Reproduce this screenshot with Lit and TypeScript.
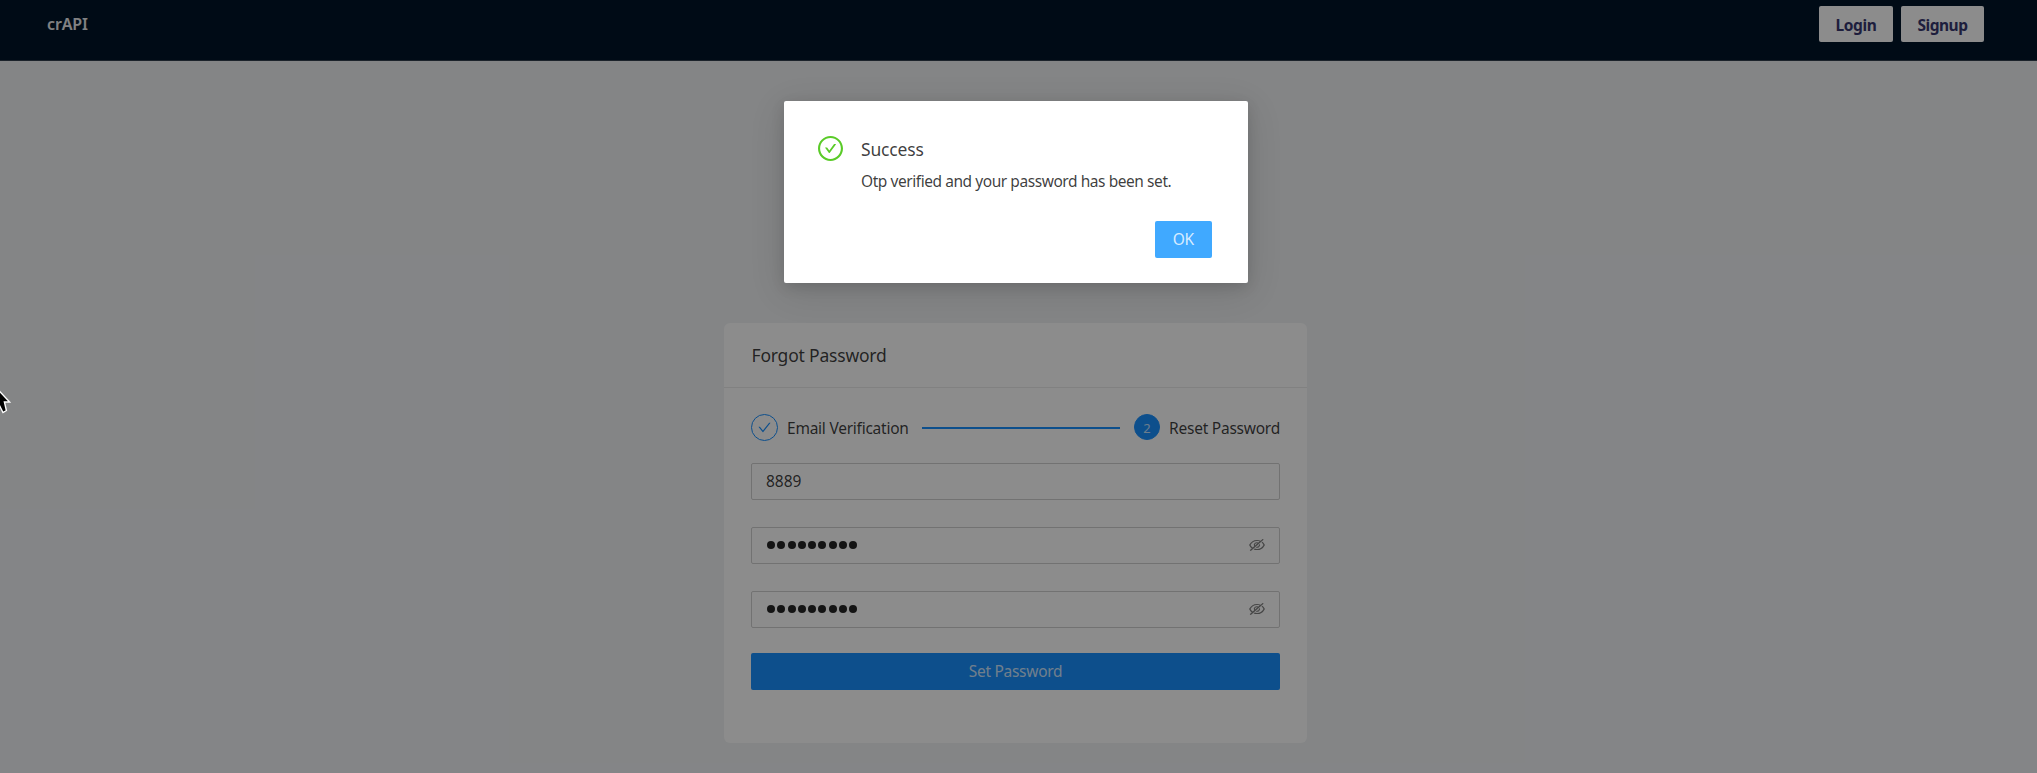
import { LitElement, html, css, svg } from "lit";
import { customElement, property } from "lit/decorators.js";

const ICONS: Record<string, string[]> = {
  check: [
    "M912 190h-69.9c-9.8 0-19.1 4.5-25.1 12.2L404.7 724.5 207 474a32 32 0 00-25.1-12.2H112c-6.7 0-10.4 7.7-6.3 12.9l273.9 347c12.8 16.2 37.4 16.2 50.3 0l488.4-618.9c4.1-5.1.4-12.8-6.3-12.8z",
  ],
  success: [
    "M699 353h-46.9c-10.2 0-19.9 4.9-25.9 13.3L469 584.3l-71.2-98.8c-6-8.3-15.6-13.3-25.9-13.3H325c-6.5 0-10.3 7.4-6.5 12.7l124.6 172.8a31.8 31.8 0 0051.7 0l210.6-292c3.9-5.3.1-12.7-6.4-12.7z",
    "M512 64C264.6 64 64 264.6 64 512s200.6 448 448 448 448-200.6 448-448S759.4 64 512 64zm0 820c-205.4 0-372-166.6-372-372s166.6-372 372-372 372 166.6 372 372-166.6 372-372 372z",
  ],
  hidden: [
    "M942.2 486.2Q889.47 375.11 816.7 305l-50.88 50.88C807.31 395.53 843.45 447.4 874.7 512 791.5 684.2 673.4 766 512 766q-72.67 0-133.87-22.38L323 798.75Q408 838 512 838q288.3 0 430.2-300.3a60.29 60.29 0 000-51.5zm-63.57-320.64L836 122.88a8 8 0 00-11.32 0L715.31 232.2Q624.86 186 512 186q-288.3 0-430.2 300.3a60.3 60.3 0 000 51.5q56.69 119.4 136.5 191.41L112.48 835a8 8 0 000 11.31L155.17 889a8 8 0 0011.31 0l712.15-712.12a8 8 0 000-11.32zM149.3 512C232.6 339.8 350.7 258 512 258c54.54 0 104.13 9.36 149.12 28.39l-70.3 70.3a176 176 0 00-238.13 238.13l-83.42 83.42C223.1 637.49 183.3 582.28 149.3 512zm246.7 0a112.11 112.11 0 01146.2-106.69L401.31 546.2A112 112 0 01396 512z",
    "M508 624c-3.46 0-6.87-.16-10.25-.47l-52.82 52.82a176.09 176.09 0 00227.42-227.42l-52.82 52.82c.31 3.38.47 6.79.47 10.25a111.94 111.94 0 01-112 112z",
  ],
};

@customElement("ui-icon")
class UiIcon extends LitElement {
  @property() name = "check";
  static styles = css`
    :host { display: block; width: 1em; height: 1em; }
    svg { display: block; width: 100%; height: 100%; fill: currentColor; }
  `;
  render() {
    return html`<svg viewBox="64 64 896 896" preserveAspectRatio="none">${ICONS[this.name].map((d) => svg`<path d=${d}></path>`)}</svg>`;
  }
}

@customElement("password-field")
class PasswordField extends LitElement {
  @property({ type: Number }) length = 9;
  static styles = css`
    :host {
      display: flex; align-items: center; justify-content: space-between;
      box-sizing: border-box; height: 37px; padding: 0 14px 1px 15px;
      border: 1px solid #d0d0d0; border-radius: 2px; background: #fff;
    }
    .dots { display: flex; gap: 2.25px; }
    .dot { width: 8px; height: 8px; border-radius: 50%; background: #262626; }
    .eye { width: 16px; height: 14px; color: rgba(0, 0, 0, 0.5); }
  `;
  render() {
    return html`<div class="dots">${Array.from({ length: this.length }, () => html`<span class="dot"></span>`)}</div>
      <ui-icon class="eye" name="hidden"></ui-icon>`;
  }
}

@customElement("app-root")
class AppRoot extends LitElement {
  static styles = css`
    :host {
      display: block; position: relative; height: 773px; overflow: hidden;
      background: #f0f2f5; color: rgba(0, 0, 0, 0.77);
      font: 15.5px/24px "Noto Sans", sans-serif;
    }
    * { box-sizing: border-box; }
    .bar {
      display: flex; justify-content: space-between; align-items: flex-start;
      height: 61px; padding: 6px 53px 0 47px; background: #001529;
      border-bottom: 1px solid #33414f;
    }
    .brand { color: #fff; opacity: 0.92; font-weight: 600; font-size: 16px; line-height: 37px; letter-spacing: -0.15px; }
    .actions { display: flex; gap: 8px; }
    .nav { height: 36px; border-radius: 2px; background: #fff; color: #38386f; font-weight: 700; font-size: 15.5px; line-height: 38px; text-align: center; letter-spacing: -0.5px; }
    .login { width: 74px; letter-spacing: -0.4px; }
    .signup { width: 83px; }
    .main { display: flex; justify-content: center; padding: 262px 6px 0 0; }
    .card { width: 583px; height: 420px; border-radius: 6px; background: #fff; }
    .head { height: 65px; padding: 0 27.5px; border-bottom: 1px solid #ececec; font-size: 17.5px; line-height: 64px; letter-spacing: -0.2px; }
    .body { display: flex; flex-direction: column; padding: 25px 27px 0; }
    .steps { display: flex; align-items: center; height: 28px; margin-bottom: 22px; }
    .badge { display: flex; align-items: center; justify-content: center; width: 27px; height: 27px; border: 1.5px solid #1890ff; border-radius: 50%; color: #1890ff; font-size: 13px; }
    .tick { width: 13px; height: 13px; }
    .on { width: 26px; height: 26px; background: #1890ff; color: rgba(255, 255, 255, 0.75); font-size: 13px; line-height: 24px; padding-top: 1px; }
    .label { margin-left: 9px; padding-top: 2px; letter-spacing: -0.24px; }
    .line { flex: 1; height: 2px; margin: 1px 14px 0 13px; background: #1890ff; }
    .otp { height: 37px; padding: 0 13px 0 14px; border: 1px solid #d0d0d0; border-radius: 2px; line-height: 35px; margin-bottom: 27px; }
    .pw { margin-bottom: 27px; }
    .primary { height: 37px; border-radius: 2px; background: #1890ff; color: rgba(255, 255, 255, 0.8); line-height: 37px; letter-spacing: -0.28px; text-align: center; }
    .last { margin-bottom: 25px; }
    .mask { position: absolute; inset: 0; display: flex; justify-content: center; align-items: flex-start; padding: 101px 6px 0 0; background: rgba(0, 0, 0, 0.45); }
    .modal { display: flex; flex-direction: column; width: 464px; height: 182px; padding: 35px 35.5px 0 34.5px; border-radius: 2px; background: #fff; box-shadow: 0 4px 14px rgba(0, 0, 0, 0.12), 0 8px 36px rgba(0, 0, 0, 0.12); }
    .note { display: flex; gap: 18px; }
    .success { width: 25px; height: 25px; color: #5acb28; }
    .title { font-size: 17.5px; line-height: 26px; letter-spacing: -0.15px; }
    .text { margin-top: 7px; line-height: 24px; letter-spacing: -0.44px; white-space: nowrap; }
    .ok { align-self: flex-end; width: 57.5px; margin-top: 28px; background: #40a9ff; }
    .pointer { position: absolute; left: 0; top: 388px; width: 12px; height: 28px; }
  `;

  render() {
    return html`
      <header class="bar">
        <div class="brand">crAPI</div>
        <nav class="actions">
          <div class="nav login">Login</div>
          <div class="nav signup">Signup</div>
        </nav>
      </header>
      <main class="main">
        <section class="card">
          <div class="head">Forgot Password</div>
          <div class="body">
            <div class="steps">
              <div class="badge"><ui-icon class="tick" name="check"></ui-icon></div>
              <div class="label">Email Verification</div>
              <div class="line"></div>
              <div class="badge on">2</div>
              <div class="label">Reset Password</div>
            </div>
            <div class="otp">8889</div>
            <password-field class="pw"></password-field>
            <password-field class="pw last"></password-field>
            <div class="primary">Set Password</div>
          </div>
        </section>
      </main>
      <div class="mask">
        <div class="modal" role="dialog">
          <div class="note">
            <ui-icon class="success" name="success"></ui-icon>
            <div>
              <div class="title">Success</div>
              <div class="text">Otp verified and your password has been set.</div>
            </div>
          </div>
          <div class="primary ok">OK</div>
        </div>
      </div>
      <svg class="pointer" viewBox="0 0 12 28">
        <path d="M-6-2.5 L9.6 14 H4.4 L6.4 22.5 L3 24.5 L-0.5 17.5 L-6 20Z" fill="#000" stroke="#fff" stroke-width="1.4"></path>
      </svg>
    `;
  }
}
